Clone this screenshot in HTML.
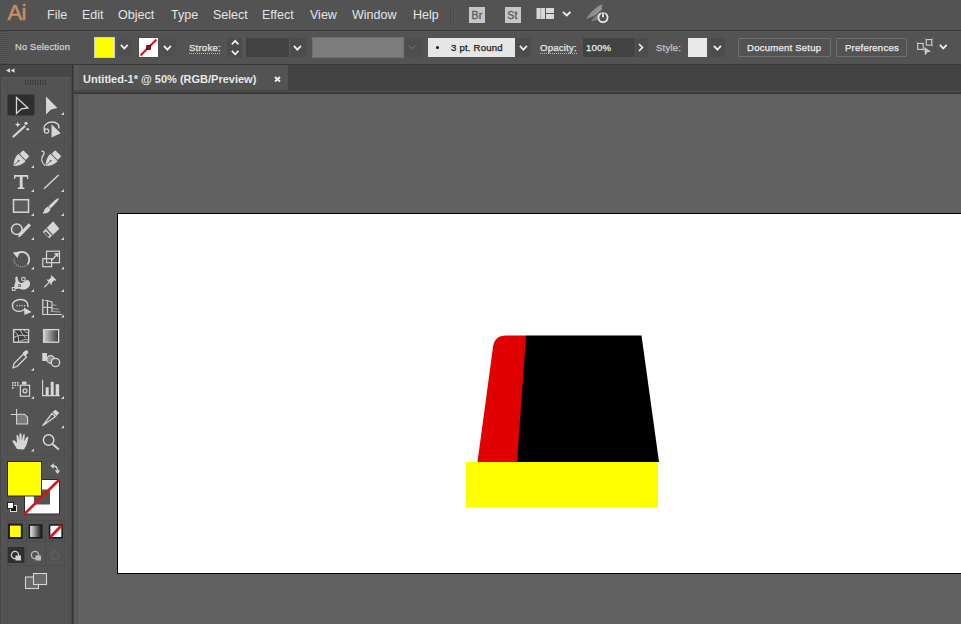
<!DOCTYPE html>
<html><head><meta charset="utf-8"><style>
*{margin:0;padding:0;box-sizing:border-box}
html,body{width:961px;height:624px;overflow:hidden;background:#535353;font-family:"Liberation Sans",sans-serif}
.a{position:absolute}
svg.a{overflow:visible}
</style></head><body>
<div class="a" style="left:0px;top:0px;width:961px;height:30px;background:#535353;"></div>
<div class="a" style="left:0px;top:30px;width:961px;height:1px;background:#3c3c3c;"></div>
<div class="a" style="left:0px;top:31px;width:961px;height:33px;background:#535353;"></div>
<div class="a" style="left:0px;top:64px;width:961px;height:1px;background:#383838;"></div>
<div class="a" style="left:0px;top:65px;width:72px;height:559px;background:#535353;"></div>
<div class="a" style="left:0px;top:65px;width:72px;height:12px;background:#464646;"></div>
<div class="a" style="left:0px;top:77px;width:72px;height:1px;background:#5a5a5a;"></div>
<div class="a" style="left:0px;top:65px;width:1px;height:559px;background:#474747;"></div>
<div class="a" style="left:71px;top:65px;width:1px;height:559px;background:#474747;"></div>
<div class="a" style="left:72px;top:65px;width:1px;height:559px;background:#363636;"></div>
<div class="a" style="left:73px;top:65px;width:1px;height:559px;background:#434343;"></div>
<div class="a" style="left:74px;top:65px;width:887px;height:29px;background:#424242;"></div>
<div class="a" style="left:74px;top:65px;width:5px;height:559px;background:#5a5a5a;"></div>
<div class="a" style="left:77px;top:65px;width:1px;height:559px;background:#555555;"></div>
<div class="a" style="left:79px;top:65px;width:209px;height:25px;background:#535353;"></div>
<div class="a" style="left:74px;top:90px;width:887px;height:2px;background:#4a4a4a;"></div>
<div class="a" style="left:74px;top:92px;width:887px;height:1px;background:#3f3f3f;"></div>
<div class="a" style="left:74px;top:93px;width:887px;height:1px;background:#363636;"></div>
<div class="a" style="left:78px;top:94px;width:883px;height:530px;background:#616161;"></div>
<div class="a" style="left:117px;top:213px;width:860px;height:361px;background:#fff;border:1px solid #000"></div>
<div class="a" style="left:7.6px;top:0.3px;font-size:22px;line-height:26px;color:#cf9a76;white-space:nowrap;line-height:26px;letter-spacing:-0.7px;-webkit-text-stroke:0.7px #b98058">Ai</div>
<div class="a" style="left:47px;top:8px;font-size:12.5px;line-height:15px;color:#e4e4e4;white-space:nowrap;line-height:15px">File</div>
<div class="a" style="left:82px;top:8px;font-size:12.5px;line-height:15px;color:#e4e4e4;white-space:nowrap;line-height:15px">Edit</div>
<div class="a" style="left:118px;top:8px;font-size:12.5px;line-height:15px;color:#e4e4e4;white-space:nowrap;line-height:15px">Object</div>
<div class="a" style="left:171px;top:8px;font-size:12.5px;line-height:15px;color:#e4e4e4;white-space:nowrap;line-height:15px">Type</div>
<div class="a" style="left:213px;top:8px;font-size:12.5px;line-height:15px;color:#e4e4e4;white-space:nowrap;line-height:15px">Select</div>
<div class="a" style="left:262px;top:8px;font-size:12.5px;line-height:15px;color:#e4e4e4;white-space:nowrap;line-height:15px">Effect</div>
<div class="a" style="left:310px;top:8px;font-size:12.5px;line-height:15px;color:#e4e4e4;white-space:nowrap;line-height:15px">View</div>
<div class="a" style="left:352px;top:8px;font-size:12.5px;line-height:15px;color:#e4e4e4;white-space:nowrap;line-height:15px">Window</div>
<div class="a" style="left:413px;top:8px;font-size:12.5px;line-height:15px;color:#e4e4e4;white-space:nowrap;line-height:15px">Help</div>
<div class="a" style="left:0px;top:31px;width:8px;height:33px;background:repeating-linear-gradient(#474747 0 1px,#5a5a5a 1px 2px);"></div>
<div class="a" style="left:15px;top:41px;font-size:9.3px;line-height:12px;letter-spacing:0.2px;color:#d0d0d0;white-space:nowrap;-webkit-text-stroke:0.25px #d0d0d0">No Selection</div>
<div class="a" style="left:94px;top:37px;width:21px;height:21px;background:#cfcfcf;"></div>
<div class="a" style="left:95px;top:38px;width:19px;height:19px;background:#ffff00;"></div>
<div class="a" style="left:117px;top:39px;width:15px;height:17px;background:#4f4f4f;"></div>
<svg class="a" style="left:119.6px;top:44.300000000000004px;" width="8.6" height="5.4" viewBox="0 0 8.6 5.4"><polyline points="0.9,0.9 4.3,4.5 7.7,0.9" fill="none" stroke="#f0f0f0" stroke-width="1.8"/></svg>
<div class="a" style="left:138px;top:37px;width:21px;height:21px;background:#4a4a4a;"></div>
<div class="a" style="left:139px;top:38px;width:19px;height:19px;background:#fff;"></div>
<svg class="a" style="left:139px;top:38px;" width="19" height="19" viewBox="0 0 19 19"><line x1="1.5" y1="17.5" x2="17.5" y2="1.5" stroke="#d8101c" stroke-width="2"/><rect x="7.7" y="7.7" width="3.6" height="3.6" fill="#d8101c" stroke="#000" stroke-width="0.9"/></svg>
<div class="a" style="left:160px;top:39px;width:16px;height:17px;background:#4f4f4f;"></div>
<svg class="a" style="left:162.9px;top:44.6px;" width="8.8" height="5.5" viewBox="0 0 8.8 5.5"><polyline points="0.9,0.9 4.4,4.6000000000000005 7.9,0.9" fill="none" stroke="#f0f0f0" stroke-width="1.8"/></svg>
<div class="a" style="left:189px;top:42.4px;font-size:9.6px;line-height:12px;letter-spacing:0.2px;color:#e6e6e6;white-space:nowrap;-webkit-text-stroke:0.25px #e6e6e6">Stroke:</div>
<div class="a" style="left:189px;top:53px;width:32px;height:1px;background:repeating-linear-gradient(90deg,#bdbdbd 0 1px,transparent 1px 2px);"></div>
<div class="a" style="left:227px;top:38px;width:15px;height:19px;background:#4c4c4c;"></div>
<svg class="a" style="left:231.35px;top:39.65px;" width="8.299999999999999" height="5.2" viewBox="0 0 8.299999999999999 5.2"><polyline points="0.85,4.35 4.1499999999999995,0.85 7.449999999999999,4.35" fill="none" stroke="#f0f0f0" stroke-width="1.7"/></svg>
<svg class="a" style="left:231.35px;top:49.949999999999996px;" width="8.299999999999999" height="5.2" viewBox="0 0 8.299999999999999 5.2"><polyline points="0.85,0.85 4.1499999999999995,4.35 7.449999999999999,0.85" fill="none" stroke="#f0f0f0" stroke-width="1.7"/></svg>
<div class="a" style="left:244px;top:38px;width:1px;height:19px;background:#5c5c5c;"></div>
<div class="a" style="left:246px;top:38px;width:43px;height:19px;background:#424242;"></div>
<div class="a" style="left:289px;top:38px;width:1px;height:19px;background:#5c5c5c;"></div>
<div class="a" style="left:290px;top:38px;width:16px;height:19px;background:#4c4c4c;"></div>
<svg class="a" style="left:292.90000000000003px;top:44.5px;" width="8.8" height="5.5" viewBox="0 0 8.8 5.5"><polyline points="0.9,0.9 4.4,4.6000000000000005 7.9,0.9" fill="none" stroke="#f0f0f0" stroke-width="1.8"/></svg>
<div class="a" style="left:312px;top:37px;width:92px;height:21px;background:#707070;"></div>
<div class="a" style="left:313px;top:38px;width:90px;height:19px;background:#7c7c7c;"></div>
<div class="a" style="left:405px;top:38px;width:17px;height:19px;background:#4e4e4e;"></div>
<svg class="a" style="left:408.09999999999997px;top:45.4px;" width="8.2" height="4.0" viewBox="0 0 8.2 4.0"><polyline points="0.6,0.6 4.1,3.4 7.6,0.6" fill="none" stroke="#6a6a6a" stroke-width="1.2"/></svg>
<div class="a" style="left:428px;top:38px;width:87px;height:19px;background:#e6e6e6;"></div>
<div class="a" style="left:436px;top:46px;width:3px;height:3px;background:#111;border-radius:50%"></div>
<div class="a" style="left:451px;top:42.4px;font-size:9.6px;line-height:12px;letter-spacing:0.2px;color:#1a1a1a;white-space:nowrap;-webkit-text-stroke:0.25px #1a1a1a">3 pt. Round</div>
<div class="a" style="left:515px;top:38px;width:16px;height:19px;background:#4c4c4c;"></div>
<svg class="a" style="left:518.6px;top:44.5px;" width="8.8" height="5.5" viewBox="0 0 8.8 5.5"><polyline points="0.9,0.9 4.4,4.6000000000000005 7.9,0.9" fill="none" stroke="#f0f0f0" stroke-width="1.8"/></svg>
<div class="a" style="left:540px;top:42.4px;font-size:9.6px;line-height:12px;letter-spacing:0.2px;color:#e6e6e6;white-space:nowrap;-webkit-text-stroke:0.25px #e6e6e6">Opacity:</div>
<div class="a" style="left:540px;top:53px;width:37px;height:1px;background:repeating-linear-gradient(90deg,#bdbdbd 0 1px,transparent 1px 2px);"></div>
<div class="a" style="left:583px;top:38px;width:51px;height:19px;background:#424242;"></div>
<div class="a" style="left:586px;top:42.4px;font-size:9.6px;line-height:12px;letter-spacing:0.2px;color:#ececec;white-space:nowrap;-webkit-text-stroke:0.25px #ececec">100%</div>
<div class="a" style="left:634px;top:38px;width:14px;height:19px;background:#4c4c4c;"></div>
<svg class="a" style="left:638px;top:43px;" width="6" height="9" viewBox="0 0 6 9"><polyline points="1,1 4.5,4.5 1,8" fill="none" stroke="#f0f0f0" stroke-width="1.6"/></svg>
<div class="a" style="left:656px;top:42.4px;font-size:9.6px;line-height:12px;letter-spacing:0.2px;color:#c4c4c4;white-space:nowrap;-webkit-text-stroke:0.25px #c4c4c4">Style:</div>
<div class="a" style="left:688px;top:38px;width:19px;height:19px;background:#e8e8e8;"></div>
<div class="a" style="left:709px;top:38px;width:16px;height:19px;background:#4c4c4c;"></div>
<svg class="a" style="left:712.6px;top:44.5px;" width="8.8" height="5.5" viewBox="0 0 8.8 5.5"><polyline points="0.9,0.9 4.4,4.6000000000000005 7.9,0.9" fill="none" stroke="#f0f0f0" stroke-width="1.8"/></svg>
<div class="a" style="left:738px;top:38px;width:93px;height:19px;border:1px solid #6e6e6e;border-radius:1px"></div>
<div class="a" style="left:747px;top:42.4px;font-size:9.6px;line-height:12px;letter-spacing:0.2px;color:#ececec;white-space:nowrap;-webkit-text-stroke:0.25px #ececec">Document Setup</div>
<div class="a" style="left:836px;top:38px;width:71px;height:19px;border:1px solid #6e6e6e;border-radius:1px"></div>
<div class="a" style="left:845px;top:42.4px;font-size:9.6px;line-height:12px;letter-spacing:0.2px;color:#ececec;white-space:nowrap;-webkit-text-stroke:0.25px #ececec">Preferences</div>
<svg class="a" style="left:0px;top:0px;" width="961" height="624" viewBox="0 0 961 624">
  <path d="M506,335.5 L526,335.5 L529,345 L521,462 L477.5,462 L493,347 Q494.5,335.5 506,335.5 Z" fill="#e10000"/>
  <path d="M526,335.5 L641.5,335.5 L659,462 L517,462 Z" fill="#000"/>
  <rect x="466" y="462" width="192" height="45.5" fill="#ffff00"/>
</svg>
<div class="a" style="left:83px;top:73px;font-size:11px;line-height:13px;color:#e8e8e8;white-space:nowrap;font-weight:bold;line-height:13px">Untitled-1* @ 50% (RGB/Preview)</div>
<svg class="a" style="left:273.5px;top:75.8px;" width="7" height="6.5" viewBox="0 0 7 6.5"><path d="M1,1 L6,5.5 M6,1 L1,5.5" stroke="#f0f0f0" stroke-width="1.8"/></svg>
<svg class="a" style="left:0px;top:0px;" width="72" height="624" viewBox="0 0 72 624"><path d="M10,68.3 L6,70.5 L10,72.7 Z M14.5,68.3 L10.5,70.5 L14.5,72.7 Z" fill="#d8d8d8"/><line x1="25.5" y1="80" x2="25.5" y2="85" stroke="#383838" stroke-width="1"/><line x1="28.0" y1="80" x2="28.0" y2="85" stroke="#383838" stroke-width="1"/><line x1="30.5" y1="80" x2="30.5" y2="85" stroke="#383838" stroke-width="1"/><line x1="33.0" y1="80" x2="33.0" y2="85" stroke="#383838" stroke-width="1"/><line x1="35.5" y1="80" x2="35.5" y2="85" stroke="#383838" stroke-width="1"/><line x1="38.0" y1="80" x2="38.0" y2="85" stroke="#383838" stroke-width="1"/><line x1="40.5" y1="80" x2="40.5" y2="85" stroke="#383838" stroke-width="1"/><line x1="43.0" y1="80" x2="43.0" y2="85" stroke="#383838" stroke-width="1"/><line x1="45.5" y1="80" x2="45.5" y2="85" stroke="#383838" stroke-width="1"/><line x1="7.5" y1="79" x2="7.5" y2="624" stroke="#4e4e4e" stroke-width="1"/><line x1="64.5" y1="79" x2="64.5" y2="624" stroke="#4e4e4e" stroke-width="1"/><line x1="69.5" y1="77" x2="69.5" y2="624" stroke="#4e4e4e" stroke-width="1"/><line x1="6" y1="143.5" x2="66" y2="143.5" stroke="#4f4f4f" stroke-width="1"/><line x1="6" y1="244.5" x2="66" y2="244.5" stroke="#4f4f4f" stroke-width="1"/><line x1="6" y1="322.5" x2="66" y2="322.5" stroke="#4f4f4f" stroke-width="1"/><line x1="6" y1="402.5" x2="66" y2="402.5" stroke="#4f4f4f" stroke-width="1"/><line x1="6" y1="455.5" x2="66" y2="455.5" stroke="#4f4f4f" stroke-width="1"/><rect x="7.5" y="94.5" width="27" height="21" rx="2" fill="#2e2e2e"/><path d="M16.5,97.5 L28,108 L21.5,108.8 L16.5,113.5 Z" fill="none" stroke="#d6d6d6" stroke-width="1.3" stroke-linejoin="miter"/><path d="M46,96.5 L57.5,108 L51,109.6 L46,114.5 Z" fill="#d6d6d6"/><path d="M64,112 L64,115 L61,115 Z" fill="#d6d6d6"/><line x1="13.5" y1="136.5" x2="24.5" y2="126.5" stroke="#d6d6d6" stroke-width="2.2" stroke-linecap="round"/><path d="M17.75,121.8 L18.6,123.8 L20.6,124.6 L18.6,125.4 L17.75,127.4 L16.9,125.4 L14.9,124.6 L16.9,123.8 Z" fill="#d6d6d6"/><circle cx="26" cy="123.3" r="1.6" fill="#d6d6d6"/><circle cx="27.7" cy="129.2" r="1.3" fill="#d6d6d6"/><path d="M45,131 C42,126 47,122 52,122 C57,122 60,125 58.5,128.5" fill="none" stroke="#d6d6d6" stroke-width="1.4"/><circle cx="46.5" cy="131" r="2.2" fill="none" stroke="#d6d6d6" stroke-width="1.2"/><path d="M51.5,124.2 L60.7,133.3 L51.5,137.5 Z" fill="#d6d6d6"/><g transform="translate(13.5,166) rotate(45) scale(0.86)"><path d="M0,0 C4.5,-5 6,-9 6,-14 L-6,-14 C-6,-9 -4.5,-5 0,0 Z" fill="#d6d6d6"/><rect x="-5" y="-21" width="10" height="6" fill="#d6d6d6"/><line x1="0" y1="-1" x2="0" y2="-8" stroke="#535353" stroke-width="0.9"/><circle cx="0" cy="-8.5" r="1.1" fill="#535353"/></g><path d="M34,165 L34,168 L31,168 Z" fill="#d6d6d6"/><path d="M45,165.5 C41,162 41,158 43,155.5 C45,153 44,150.5 41.5,151.5" fill="none" stroke="#d6d6d6" stroke-width="1.3"/><g transform="translate(45.5,166) rotate(45) scale(0.86)"><path d="M0,0 C4.5,-5 6,-9 6,-14 L-6,-14 C-6,-9 -4.5,-5 0,0 Z" fill="#d6d6d6"/><rect x="-5" y="-21" width="10" height="6" fill="#d6d6d6"/><line x1="0" y1="-1" x2="0" y2="-8" stroke="#535353" stroke-width="0.9"/><circle cx="0" cy="-8.5" r="1.1" fill="#535353"/></g><path d="M14,175 L28.2,175 L28.2,179 L27.2,179 L26.6,176.8 L22.6,176.8 L22.6,187.4 L24.4,187.4 L24.4,189 L17.8,189 L17.8,187.4 L19.8,187.4 L19.8,176.8 L15.6,176.8 L15,179 L14,179 Z" fill="#d6d6d6"/><path d="M34,189 L34,192 L31,192 Z" fill="#d6d6d6"/><line x1="44" y1="188.7" x2="58.6" y2="175" stroke="#d6d6d6" stroke-width="1.5"/><path d="M64,189 L64,192 L61,192 Z" fill="#d6d6d6"/><rect x="13.5" y="199.7" width="15" height="12.5" fill="#5c5c5c" stroke="#d6d6d6" stroke-width="1.5"/><path d="M34,213 L34,216 L31,216 Z" fill="#d6d6d6"/><path d="M58.8,198.5 C59.5,199.5 55,204 50.5,208.5 L48.5,206.5 C53,202 57.5,197.5 58.8,198.5 Z" fill="#d6d6d6"/><path d="M48,206.5 L50.5,209 C50,212 47,213.5 42.75,213.7 C44,211 44.5,208 48,206.5 Z" fill="#d6d6d6"/><path d="M64,213 L64,216 L61,216 Z" fill="#d6d6d6"/><circle cx="16.8" cy="229.2" r="5.3" fill="#585858" stroke="#d6d6d6" stroke-width="1.5"/><path d="M31,225.5 L28.8,223.3 L18.8,233.5 L18.2,237.5 L21,236 Z" fill="#d6d6d6"/><path d="M34,237 L34,240 L31,240 Z" fill="#d6d6d6"/><path d="M53.2,221.2 L59.4,228.7 L49.4,238.2 L42.75,232 Z" fill="#d6d6d6"/><path d="M46.5,228.5 L52.5,235.3" stroke="#535353" stroke-width="1.2"/><path d="M45,232 L49,236" stroke="#535353" stroke-width="2"/><path d="M64,237 L64,240 L61,240 Z" fill="#d6d6d6"/><path d="M16.5,253.8 C20.5,250.8 26.5,251.5 28.6,256.5 C29.8,259.5 29,262.5 27.5,264.5" fill="none" stroke="#d6d6d6" stroke-width="1.8"/><path d="M27.5,264.5 C24.5,267.5 18.5,267.5 15.5,264 C14,262 13.8,260 14,258.5" fill="none" stroke="#9a9a9a" stroke-width="1.3" stroke-dasharray="1.3 1"/><path d="M12.8,252.5 L20,251.5 L17.5,258 Z" fill="#d6d6d6"/><path d="M34,266.5 L34,269.5 L31,269.5 Z" fill="#d6d6d6"/><rect x="46.5" y="251.2" width="13" height="11.5" fill="none" stroke="#d6d6d6" stroke-width="1.2"/><rect x="42.8" y="258.7" width="8.8" height="8" fill="none" stroke="#d6d6d6" stroke-width="1.2"/><path d="M52,260 L57.5,254 M54.5,254 L57.8,253.7 L57.5,257" stroke="#d6d6d6" stroke-width="1.3" fill="none"/><path d="M64,266.5 L64,269.5 L61,269.5 Z" fill="#d6d6d6"/><path d="M15,289 C13,285 16,283 15.5,280 C15,278 15.5,276 17,276.5 C18,277 17.5,279.5 18.5,281 C20,284 23,283 25,281 C27,279 30,280 30,283.5 C30,287 27,289.5 23.5,289.5 C20,289.5 18.5,287.5 17,289 Z" fill="#d6d6d6"/><circle cx="19.5" cy="285.5" r="1.6" fill="#535353"/><circle cx="19.5" cy="285.5" r="0.8" fill="#d6d6d6"/><circle cx="23.5" cy="279" r="1.8" fill="#535353" stroke="#d6d6d6" stroke-width="1.1"/><rect x="12.3" y="287.5" width="2.8" height="2.8" fill="#535353" stroke="#d6d6d6" stroke-width="1"/><path d="M34,289 L34,292 L31,292 Z" fill="#d6d6d6"/><g transform="translate(48.5,283) rotate(45) scale(0.85)"><path d="M-4,-9 L4,-9 L4,-7.5 L2.5,-7.5 L2.5,-3 L4.8,-1 L-4.8,-1 L-2.5,-3 L-2.5,-7.5 L-4,-7.5 Z" fill="#d6d6d6"/><line x1="0" y1="-1" x2="0" y2="7" stroke="#d6d6d6" stroke-width="1.5"/></g><path d="M64,289 L64,292 L61,292 Z" fill="#d6d6d6"/><path d="M24.5,309.5 C20,312.5 13,312 12.5,306 C12,301 18,299.5 21,299.5 C25,299.5 28.5,302 28,307" fill="none" stroke="#d6d6d6" stroke-width="1.4"/><rect x="16.5" y="305" width="1.2" height="1.2" fill="#d6d6d6"/><rect x="19" y="305" width="1.2" height="1.2" fill="#d6d6d6"/><rect x="21.5" y="305" width="1.2" height="1.2" fill="#d6d6d6"/><rect x="24" y="305" width="1.2" height="1.2" fill="#d6d6d6"/><path d="M24,307.4 L31.5,312 L24.4,315 Z" fill="#d6d6d6"/><path d="M34,314.4 L34,317.4 L31,317.4 Z" fill="#d6d6d6"/><path d="M42.8,299 L42.8,315 M42.8,299.5 L52.5,302 M47.5,300.5 L47.5,314 M52,302 L52,312 M42.8,307 L52,307.5 M42.8,314.5 L62,314.5" fill="none" stroke="#d6d6d6" stroke-width="1.2"/><path d="M52,304.5 L56.5,305.5 M52,308.5 L59,309.3 M52,311.5 L60.5,312" fill="none" stroke="#a8a8a8" stroke-width="1"/><path d="M64,314.4 L64,317.4 L61,317.4 Z" fill="#d6d6d6"/><rect x="13.6" y="329.6" width="15" height="12.6" fill="#3e3e3e" stroke="#d6d6d6" stroke-width="1.3"/><path d="M14,331 C17,333 19,336 18.5,342 M20,330 C22,333 23,336 26,338 M14,337.5 C17,335.5 21,335 25.5,335.5 C27,335.6 28,335.8 28.6,336 M24,330 C25,332 27,333 28.5,333 M19,342 C22,340 25,339 28.5,340" fill="none" stroke="#c4c4c4" stroke-width="1"/><defs><linearGradient id="g1" x1="0" x2="1"><stop offset="0" stop-color="#d0d0d0"/><stop offset="1" stop-color="#3a3a3a"/></linearGradient><linearGradient id="g2" x1="0" x2="1"><stop offset="0" stop-color="#f4f4f4"/><stop offset="1" stop-color="#111"/></linearGradient></defs><rect x="43.6" y="329.6" width="15" height="12.6" fill="url(#g1)" stroke="#d6d6d6" stroke-width="1.3"/><path d="M13,367.8 L14,363.5 L23.5,354 L26.5,357 L17,366.5 Z" fill="none" stroke="#d6d6d6" stroke-width="1.3"/><path d="M22.5,353 L25.5,350.5 C27,349.5 29,351.5 28,353 L25.5,356 Z" fill="#d6d6d6"/><path d="M34,367.8 L34,370.8 L31,370.8 Z" fill="#d6d6d6"/><rect x="42.3" y="353" width="4.6" height="8" fill="#d6d6d6"/><circle cx="50.7" cy="359.4" r="3.8" fill="#8c8c8c" stroke="#d6d6d6" stroke-width="1.2"/><circle cx="55.5" cy="362.5" r="4.2" fill="#5a5a5a" stroke="#d6d6d6" stroke-width="1.3"/><rect x="12" y="382" width="1.6" height="1.6" fill="#d6d6d6"/><rect x="14.5" y="382" width="1.6" height="1.6" fill="#d6d6d6"/><rect x="17" y="382" width="1.6" height="1.6" fill="#d6d6d6"/><rect x="12" y="384.5" width="1.6" height="1.6" fill="#d6d6d6"/><rect x="14.5" y="384.5" width="1.6" height="1.6" fill="#d6d6d6"/><rect x="12" y="387" width="1.6" height="1.6" fill="#d6d6d6"/><rect x="17" y="384.5" width="1.6" height="1.6" fill="#d6d6d6"/><rect x="20.4" y="385.2" width="9.2" height="11" fill="none" stroke="#d6d6d6" stroke-width="1.2"/><rect x="22" y="381.5" width="4.5" height="3" fill="#d6d6d6"/><circle cx="25" cy="390.8" r="2" fill="none" stroke="#d6d6d6" stroke-width="1.2"/><path d="M34,396 L34,399 L31,399 Z" fill="#d6d6d6"/><path d="M42.6,379.8 L42.6,395.6 L59.7,395.6" fill="none" stroke="#d6d6d6" stroke-width="1.1"/><rect x="45.7" y="387.2" width="3" height="8.4" fill="#d6d6d6"/><rect x="50.7" y="381.8" width="3" height="13.8" fill="#d6d6d6"/><rect x="55.7" y="384.2" width="3.4" height="11.4" fill="#d6d6d6"/><path d="M64,396 L64,399 L61,399 Z" fill="#d6d6d6"/><path d="M10.7,414.5 L16.6,414.5 M16.6,409 L16.6,414.5" stroke="#d6d6d6" stroke-width="1.1"/><path d="M16.6,414.2 L24.5,414.2 L27.6,417.3 L27.6,424 L16.6,424 Z" fill="#7a7a7a" stroke="#d6d6d6" stroke-width="1.1"/><path d="M42.5,425.8 L52,413.5 L55.5,416.5 Z" fill="none" stroke="#d6d6d6" stroke-width="1.3"/><path d="M52.5,412 L55.5,409.8 L59.2,413 L56.5,416 Z" fill="#d6d6d6"/><path d="M64,425.3 L64,428.3 L61,428.3 Z" fill="#d6d6d6"/><path d="M17,449 L14,444 L12.5,441.5 C12.5,440 14,440 15,441 L17,443 L16.5,436 C16.5,434.5 18.3,434.5 18.4,436 L19.2,441 L19.5,434.2 C19.6,432.8 21.4,432.8 21.5,434.2 L21.8,441 L23,435.2 C23.3,433.8 25,434 24.8,435.5 L24.2,441.5 L26.3,437.5 C26.8,436.3 28.6,436.7 28.3,438.2 L26.5,445 L24,449.4 Z" fill="#d6d6d6"/><path d="M34,448.5 L34,451.5 L31,451.5 Z" fill="#d6d6d6"/><circle cx="48.6" cy="440" r="5.2" fill="none" stroke="#d6d6d6" stroke-width="1.5"/><line x1="52.5" y1="444" x2="58.8" y2="449.5" stroke="#d6d6d6" stroke-width="2"/><rect x="24.5" y="479.5" width="35" height="34.5" fill="#fff" stroke="#2a2a2a" stroke-width="1"/><rect x="34" y="489.5" width="16" height="15" fill="#535353"/><line x1="24.5" y1="514" x2="59.5" y2="479.5" stroke="#e0101c" stroke-width="2.6"/><rect x="7.5" y="461.5" width="34" height="34.5" fill="#ffff00" stroke="#2a2a2a" stroke-width="1"/><path d="M53,466 C56,466 57.5,467.5 57.5,470.5" fill="none" stroke="#d6d6d6" stroke-width="1.3"/><path d="M50.3,466 L53.8,463.3 L53.8,468.7 Z M57.5,474 L54.8,470.3 L60.2,470.3 Z" fill="#d6d6d6"/><rect x="10.5" y="505.5" width="6" height="6" fill="#111" stroke="#ddd" stroke-width="1"/><rect x="7.5" y="502.5" width="6" height="6" fill="#fff" stroke="#222" stroke-width="1"/><path d="M7,520.5 L65,520.5 M7,541.5 L65,541.5 M7,565.5 L65,565.5 M26.5,521 L26.5,565 M45.5,521 L45.5,565" stroke="#4c4c4c" stroke-width="1"/><rect x="9" y="524.6" width="12.8" height="13.4" fill="#ffff00" stroke="#1e1e1e" stroke-width="2"/><rect x="29.3" y="525" width="12.5" height="12.8" fill="url(#g2)" stroke="#1e1e1e" stroke-width="1.6"/><rect x="49.6" y="525" width="12.5" height="12.8" fill="#fff" stroke="#1e1e1e" stroke-width="1.6"/><line x1="50.2" y1="537.2" x2="61.5" y2="525.6" stroke="#e0101c" stroke-width="2.8"/><rect x="7.7" y="547" width="16.7" height="16" fill="#2f2f2f"/><circle cx="15" cy="555" r="3.6" fill="none" stroke="#d6d6d6" stroke-width="1.3"/><rect x="15.5" y="555.5" width="5.5" height="5" fill="#d6d6d6"/><circle cx="35" cy="555" r="3.6" fill="none" stroke="#bcbcbc" stroke-width="1.3"/><rect x="35.5" y="555.5" width="5.5" height="5" fill="#bcbcbc"/><circle cx="55" cy="555.5" r="3.8" fill="none" stroke="#606060" stroke-width="1.3"/><rect x="25.5" y="577" width="13" height="11.5" fill="#6a6a6a" stroke="#d6d6d6" stroke-width="1.1"/><rect x="33.5" y="573.5" width="13" height="11" fill="#6a6a6a" stroke="#d6d6d6" stroke-width="1.1"/></svg>
<div class="a" style="left:450px;top:3px;width:1px;height:22px;background:#4b4b4b;"></div>
<div class="a" style="left:451px;top:3px;width:1px;height:22px;background:#585858;"></div>
<div class="a" style="left:453px;top:3px;width:1px;height:22px;background:#4b4b4b;"></div>
<div class="a" style="left:454px;top:3px;width:1px;height:22px;background:#585858;"></div>
<div class="a" style="left:469px;top:7px;width:16px;height:16px;background:#c6c6c6;"></div>
<div class="a" style="left:471.5px;top:8.6px;font-size:10.5px;line-height:13px;color:#585858;white-space:nowrap;line-height:12px;letter-spacing:0.3px;-webkit-text-stroke:0.3px #585858">Br</div>
<div class="a" style="left:505px;top:7px;width:16px;height:16px;background:#c6c6c6;"></div>
<div class="a" style="left:507.3px;top:8.6px;font-size:10.5px;line-height:13px;color:#585858;white-space:nowrap;line-height:12px;letter-spacing:0.3px;-webkit-text-stroke:0.3px #585858">St</div>
<svg class="a" style="left:536px;top:8px;" width="19" height="11" viewBox="0 0 19 11"><rect x="0.5" y="0" width="8.5" height="11" fill="#d8d8d8"/><line x1="4.7" y1="0" x2="4.7" y2="11" stroke="#9a9a9a" stroke-width="0.9"/><rect x="10" y="0" width="8" height="5" fill="#d8d8d8"/><rect x="10" y="6" width="8" height="5" fill="#d8d8d8"/></svg>
<svg class="a" style="left:561.55px;top:10.55px;" width="9.4" height="5.4" viewBox="0 0 9.4 5.4"><polyline points="0.95,0.95 4.7,4.45 8.45,0.95" fill="none" stroke="#eeeeee" stroke-width="1.9"/></svg>
<svg class="a" style="left:584px;top:2px;" width="26" height="22" viewBox="0 0 26 22"><path d="M2,17 C5,12 9,8 13,5 C15,3.5 17,2.5 19,2 C18,4 17.5,6 18,8 C16,9 14,10.5 13,12 C10,14 6,15.5 2,17 Z" fill="#8e8e8e"/><path d="M7,19.5 C9,16 12,13 16,11 L18,10 C17,13 15,16 13,18 Z" fill="#7e7e7e"/><path d="M11,12 L17,6" stroke="#a8a8a8" stroke-width="0.8"/><circle cx="19" cy="15.5" r="4.6" fill="none" stroke="#e8e8e8" stroke-width="1.8"/><line x1="19" y1="9.5" x2="19" y2="15.2" stroke="#535353" stroke-width="3.2"/><line x1="19" y1="10.3" x2="19" y2="15.2" stroke="#e8e8e8" stroke-width="1.8"/></svg>
<svg class="a" style="left:914px;top:36px;" width="24" height="22" viewBox="0 0 24 22"><rect x="3.7" y="7.4" width="5.5" height="6" fill="none" stroke="#d0d0d0" stroke-width="1.1"/><rect x="12.3" y="3.6" width="5.5" height="5.5" fill="none" stroke="#d0d0d0" stroke-width="1.1"/><path d="M10.3,11 L17,15.6 L13.6,16.2 L10.9,19.4 Z" fill="#c8c8c8"/><path d="M2.5,6.2 L4,7.6 M10.5,14.8 L9,13.3 M11.2,2.4 L12.6,3.8 M19,10.4 L17.6,9 M19,2.4 L17.6,3.8" stroke="#c0c0c0" stroke-width="0.9"/></svg>
<svg class="a" style="left:939.4499999999999px;top:44.05px;" width="8.5" height="5.3" viewBox="0 0 8.5 5.3"><polyline points="0.85,0.85 4.25,4.45 7.6499999999999995,0.85" fill="none" stroke="#eeeeee" stroke-width="1.7"/></svg>
</body></html>
